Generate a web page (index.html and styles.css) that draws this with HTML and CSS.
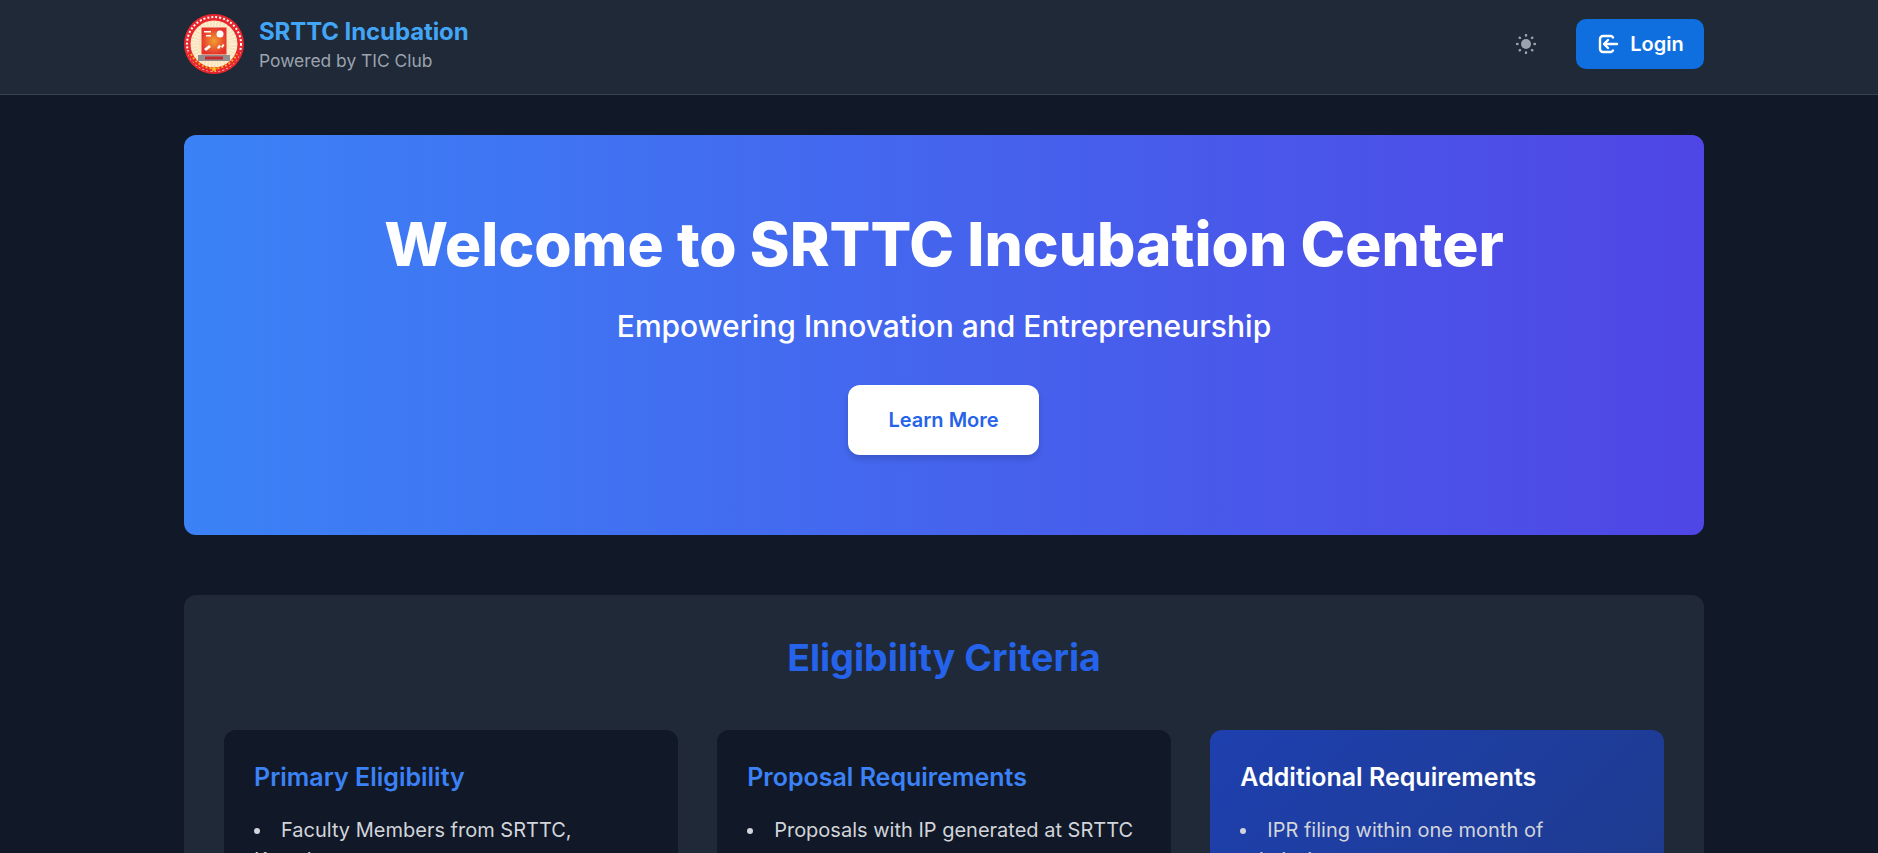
FILE: index.html
```html
<!DOCTYPE html>
<html lang="en">
<head>
  <meta charset="UTF-8">
  <meta name="viewport" content="width=device-width, initial-scale=1.0">
  <title>SRTTC Incubation</title>
  <link rel="stylesheet" href="styles.css">
</head>
<body>
  <header class="topbar">
    <div class="container topbar-row">
      <a class="brand" href="#">
        <svg class="logo" viewBox="0 0 60 60" aria-hidden="true">
          <defs>
            <radialGradient id="glow">
              <stop offset="0" stop-color="#f0a030"/>
              <stop offset="1" stop-color="#e5322d"/>
            </radialGradient>
          </defs>
          <circle cx="30" cy="30" r="30" fill="#e8262c"/>
          <circle cx="30" cy="30" r="27" fill="none" stroke="#fff" stroke-width="2" stroke-dasharray="2 2"/>
          <circle cx="30" cy="30" r="23.500" fill="#f8e2ba"/>
          <circle cx="30" cy="30" r="19" fill="none" stroke="#fff3dc" stroke-width="8" stroke-dasharray="1 2"/>
          <path d="M7 38a24.500 24.500 0 0 0 46 0l4-1a28 28 0 0 1-54 0z" fill="#e8262c"/>
          <path d="M7 40a25.500 25.500 0 0 0 46 0" fill="none" stroke="#f4b01c" stroke-width="2" stroke-dasharray="2 2"/>
          <path d="M30 52l1 2.200h2.400l-1.900 1.500.7 2.300-2.200-1.400-2.200 1.400.7-2.300-1.900-1.500H29z" fill="#f7c21c"/>
          <path d="M17 13h26v28H17z" fill="url(#glow)" stroke="#fbe6c4" stroke-width="1"/>
          <path d="M20 17h7v1.500h-7zM22 21h5v1.500h-5zM20 35l5-4 2 2-5 4zM33 34l2-3 2 1-2 3zM37 33l2-3 1.500 1-2 3z" fill="#fff"/>
          <circle cx="36" cy="20" r="3.500" fill="#fff"/>
          <path d="M14 41h32v6H14z" fill="#8f8f8f"/>
          <path d="M21 42.500h18v3H21z" fill="#c8282c"/>
        </svg>
        <span class="brand-text">
          <span class="brand-title">SRTTC Incubation</span>
          <span class="brand-sub">Powered by TIC Club</span>
        </span>
      </a>
      <div class="topbar-actions">
        <button class="theme-btn" aria-label="Toggle theme">
          <svg viewBox="0 0 20 20" width="20" height="20" fill="none" stroke="#9ca3af" stroke-width="2.400" stroke-linecap="round">
            <circle cx="10" cy="10" r="5" fill="#9ca3af" stroke="none"/>
            <path d="M10 1v.500M10 18.500v.500M1 10h.500M18.500 10h.500M3.700 3.700l.300.300M16 16l.300.300M3.700 16.300l.300-.300M16 4l.300-.300"/>
          </svg>
        </button>
        <a class="login-btn" href="#">
          <svg viewBox="0 0 24 24" width="24" height="24" fill="none" stroke="#fff" stroke-width="2.400" stroke-linecap="round" stroke-linejoin="round">
            <path d="M17 5.500A3 3 0 0 0 15 4H7a3 3 0 0 0-3 3v10a3 3 0 0 0 3 3h8a3 3 0 0 0 2-1.500"/>
            <path d="M21 12H8M12 8l-4 4 4 4"/>
          </svg>
          Login
        </a>
      </div>
    </div>
  </header>

  <main class="container">
    <section class="hero">
      <h1>Welcome to SRTTC Incubation Center</h1>
      <p>Empowering Innovation and Entrepreneurship</p>
      <a class="hero-btn" href="#">Learn More</a>
    </section>

    <section class="eligibility">
      <h2>Eligibility Criteria</h2>
      <div class="card-grid">
        <div class="card">
          <h3>Primary Eligibility</h3>
          <ul>
            <li>Faculty Members from SRTTC, Kamshet</li>
            <li>Students of SRTTC</li>
          </ul>
        </div>
        <div class="card">
          <h3>Proposal Requirements</h3>
          <ul>
            <li>Proposals with IP generated at SRTTC campus</li>
            <li>Detailed project plan</li>
          </ul>
        </div>
        <div class="card card-accent">
          <h3>Additional Requirements</h3>
          <ul>
            <li>IPR filing within one month of admission</li>
            <li>Regular progress reports</li>
          </ul>
        </div>
      </div>
    </section>
  </main>
</body>
</html>
```

FILE: styles.css
```css
* {
  box-sizing: border-box;
}
body {
  margin: 0;
  background: #111827;
  color: #fff;
  font-family: Inter, "Liberation Sans", sans-serif;
}
a {
  text-decoration: none;
}
.container {
  width: 1520px;
  margin-left: 184px;
}

/* header */
.topbar {
  height: 95px;
  background: #1f2937;
  border-bottom: 1px solid #374151;
}
.topbar-row {
  height: 88px;
  display: flex;
  align-items: center;
  justify-content: space-between;
}
.brand {
  display: flex;
  align-items: center;
  gap: 15px;
}
.logo {
  width: 60px;
  height: 60px;
}
.brand-text {
  display: flex;
  flex-direction: column;
  padding-top: 1px;
}
.brand-title {
  font-size: 24px;
  line-height: 33px;
  font-weight: 700;
  letter-spacing: -0.1px;
  color: #42a5f5;
}
.brand-sub {
  font-size: 17.400px;
  line-height: 26px;
  color: #9ca3af;
}
.topbar-actions {
  display: flex;
  align-items: center;
  gap: 30px;
}
.theme-btn {
  width: 40px;
  height: 40px;
  padding: 0;
  display: flex;
  align-items: center;
  justify-content: center;
  background: none;
  border: 0;
}
.login-btn {
  width: 128px;
  height: 50px;
  display: flex;
  align-items: center;
  justify-content: center;
  gap: 10px;
  background: #0f6fde;
  border-radius: 10px;
  color: #fff;
  font-size: 20px;
  font-weight: 600;
}

/* hero */
.hero {
  margin-top: 40px;
  height: 400px;
  padding-top: 70px;
  text-align: center;
  background: linear-gradient(90deg, #3b82f6, #4f46e5);
  border-radius: 12px;
}
.hero h1 {
  margin: 0;
  font-size: 60.300px;
  line-height: 80px;
  font-weight: 800;
}
.hero p {
  margin: 21px 0 0;
  font-size: 30px;
  line-height: 40px;
  font-weight: 500;
}
.hero-btn {
  display: inline-block;
  margin-top: 39px;
  margin-right: 1px;
  width: 191px;
  height: 70px;
  line-height: 70px;
  background: #fff;
  border-radius: 12px;
  color: #2563eb;
  font-size: 20px;
  font-weight: 600;
  box-shadow: 0 4px 6px rgba(0,0,0,0.15);
}

/* eligibility */
.eligibility {
  margin-top: 60px;
  padding: 39px 40px 40px;
  background: #1f2937;
  border-radius: 12px;
}
.eligibility h2 {
  margin: 0 0 48px;
  text-align: center;
  font-size: 37.500px;
  line-height: 48px;
  font-weight: 700;
  color: #2563eb;
}
.card-grid {
  display: grid;
  grid-template-columns: repeat(3, 1fr);
  gap: 39.500px;
}
.card {
  padding: 31px 30px 30px;
  background: #111827;
  border-radius: 12px;
}
.card h3 {
  margin: 0 0 22px;
  font-size: 25px;
  line-height: 32px;
  font-weight: 600;
  color: #3b82f6;
}
.card ul {
  margin: 0;
  padding: 0;
  list-style: inside disc;
}
.card li {
  font-size: 20px;
  line-height: 30px;
  margin-bottom: 12px;
  color: #d1d5db;
}
.card-accent {
  background: linear-gradient(135deg, #1e40af, #1e3a8a);
}
.card-accent h3 {
  color: #fff;
}
```
